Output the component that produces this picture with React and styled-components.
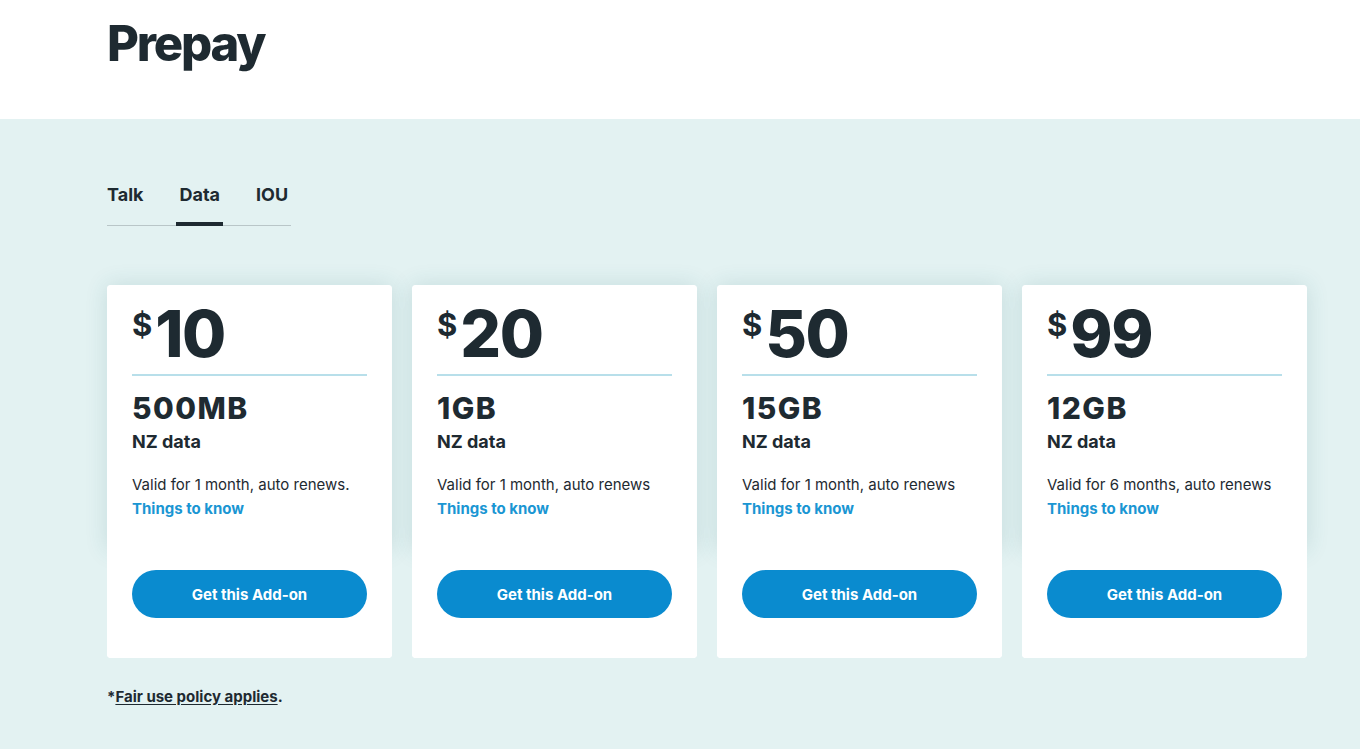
import React, { useState } from 'react';
import styled, { createGlobalStyle } from 'styled-components';

const GlobalStyle = createGlobalStyle`
  body {
    margin: 0;
    font-family: 'Inter', 'Noto Sans', sans-serif;
    color: #1e2a31;
    background: #e3f2f2;
  }
`;

const Header = styled.div`
  background: #fff;
  height: 119px;
  padding: 0 107px;
  box-sizing: border-box;
`;

const Title = styled.h1`
  margin: 0;
  padding-top: 19px;
  font-size: 49px;
  line-height: 1;
  font-weight: 800;
  letter-spacing: -2.2px;
`;

const Main = styled.div`
  padding: 65px 107px 44px;
`;

const Tabs = styled.div`
  display: inline-flex;
  gap: 30px;
  border-bottom: 1px solid #b9c6c8;
`;

const Tab = styled.button`
  position: relative;
  background: none;
  border: none;
  padding: 0 3px 20px;
  margin: 0;
  font-family: inherit;
  font-size: 18px;
  font-weight: 700;
  color: #1e2a31;
  cursor: pointer;

  &:first-child {
    padding-left: 0;
  }

  &::after {
    content: '';
    position: absolute;
    left: 0;
    right: 0;
    bottom: -1px;
    height: 4px;
    background: ${(p) => (p.$active ? '#1e2a31' : 'transparent')};
  }
`;

const CardRow = styled.div`
  display: grid;
  grid-template-columns: repeat(4, 285px);
  gap: 20px;
  margin-top: 59px;
`;

const Card = styled.div`
  background: #fff;
  border-radius: 4px;
  height: 373px;
  display: flex;
  flex-direction: column;
`;

// upper part carries the soft shadow, the bottom part covers it
const CardTop = styled.div`
  background: #fff;
  border-radius: 4px 4px 0 0;
  padding: 17px 25px 36px;
  height: 265px;
  box-sizing: border-box;
  box-shadow: 0 0 22px rgba(40, 110, 120, 0.16);
`;

const CardBottom = styled.div`
  background: #fff;
  border-radius: 0 0 4px 4px;
  padding: 20px 25px 40px;
  flex: 1;
`;

const Price = styled.div`
  display: flex;
  align-items: flex-start;
  padding-bottom: 8px;
  border-bottom: 2px solid #b8dfea;
`;

const Dollar = styled.span`
  font-size: 31px;
  font-weight: 700;
  line-height: 1;
  margin-top: 7px;
  margin-right: 3px;
`;

const Amount = styled.span`
  font-size: 64px;
  font-weight: 800;
  line-height: 1;
  letter-spacing: -1.5px;
`;

const Size = styled.div`
  margin-top: 16px;
  font-size: 30px;
  font-weight: 800;
  line-height: 1.1;
  letter-spacing: 1.5px;
`;

const Sub = styled.div`
  font-size: 18px;
  font-weight: 700;
  margin-top: 6px;
`;

const Desc = styled.p`
  margin: 21px 0 0;
  font-size: 15px;
  line-height: 24px;
`;

const Link = styled.a`
  display: block;
  color: #1a96d3;
  font-size: 15px;
  font-weight: 700;
  line-height: 24px;
  text-decoration: none;
`;

const Button = styled.button`
  width: 100%;
  height: 48px;
  border: none;
  border-radius: 24px;
  background: #0a8bcf;
  color: #fff;
  font-family: inherit;
  font-size: 15px;
  font-weight: 700;
  cursor: pointer;
`;

const Note = styled.p`
  margin: 29px 0 0;
  font-size: 15px;
  font-weight: 700;

  a {
    color: inherit;
    text-decoration: underline;
    text-underline-offset: 2px;
  }
`;

const plans = [
  { price: 10, size: '500MB', valid: 'Valid for 1 month, auto renews.' },
  { price: 20, size: '1GB', valid: 'Valid for 1 month, auto renews' },
  { price: 50, size: '15GB', valid: 'Valid for 1 month, auto renews' },
  { price: 99, size: '12GB', valid: 'Valid for 6 months, auto renews' },
];

const App = () => {
  const [tab, setTab] = useState('Data');

  return (
    <>
      <GlobalStyle />
      <Header>
        <Title>Prepay</Title>
      </Header>
      <Main>
        <Tabs>
          {['Talk', 'Data', 'IOU'].map((t) => (
            <Tab key={t} $active={tab === t} onClick={() => setTab(t)}>
              {t}
            </Tab>
          ))}
        </Tabs>
        <CardRow>
          {plans.map((plan) => (
            <Card key={plan.price}>
              <CardTop>
                <Price>
                  <Dollar>$</Dollar>
                  <Amount>{plan.price}</Amount>
                </Price>
                <Size>{plan.size}</Size>
                <Sub>NZ data</Sub>
                <Desc>{plan.valid}</Desc>
                <Link href="#">Things to know</Link>
              </CardTop>
              <CardBottom>
                <Button>Get this Add-on</Button>
              </CardBottom>
            </Card>
          ))}
        </CardRow>
        <Note>
          *<a href="#">Fair use policy applies</a>.
        </Note>
      </Main>
    </>
  );
};

export default App;
